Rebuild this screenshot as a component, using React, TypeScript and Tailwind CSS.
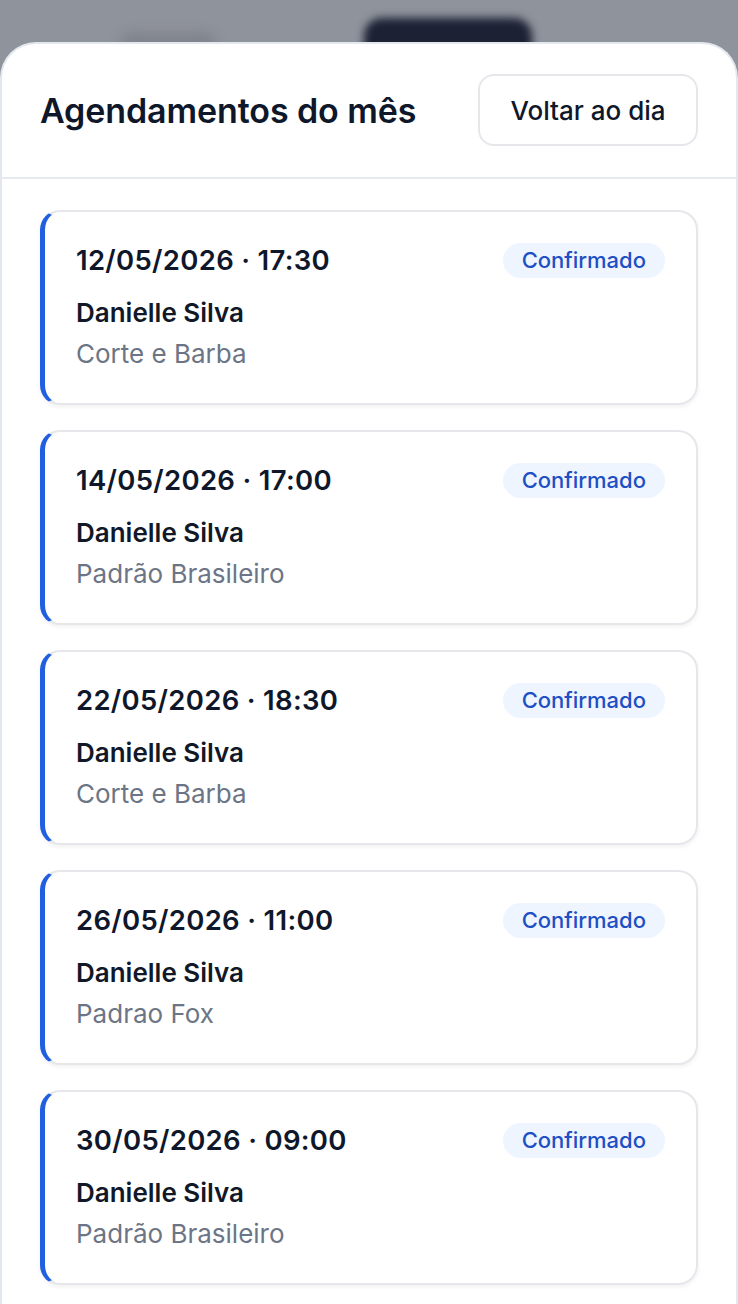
import React from 'react';

interface Appointment {
  id: number;
  date: string;
  time: string;
  client: string;
  service: string;
  status: string;
}

const appointments: Appointment[] = [
  { id: 1, date: '12/05/2026', time: '17:30', client: 'Danielle Silva', service: 'Corte e Barba', status: 'Confirmado' },
  { id: 2, date: '14/05/2026', time: '17:00', client: 'Danielle Silva', service: 'Padrão Brasileiro', status: 'Confirmado' },
  { id: 3, date: '22/05/2026', time: '18:30', client: 'Danielle Silva', service: 'Corte e Barba', status: 'Confirmado' },
  { id: 4, date: '26/05/2026', time: '11:00', client: 'Danielle Silva', service: 'Padrao Fox', status: 'Confirmado' },
  { id: 5, date: '30/05/2026', time: '09:00', client: 'Danielle Silva', service: 'Padrão Brasileiro', status: 'Confirmado' },
];

const AppointmentCard: React.FC<{ item: Appointment }> = ({ item }) => (
  <div className="rounded-[20px] border-2 border-l-[5px] border-[#e5e7eb] border-l-[#1f5fe0] bg-white px-[31px] pt-[31px] pb-[32px] shadow-[0_2px_4px_rgba(15,23,42,0.06)]">
    <div className="flex items-center justify-between h-[35px]">
      <span className="text-[27.5px] font-semibold text-[#0f172a] tracking-[0.3px]">
        {item.date} · {item.time}
      </span>
      <span className="h-[35px] flex items-center px-[19px] rounded-full bg-[#eef5ff] text-[22px] font-medium text-[#1e4fc4]">
        {item.status}
      </span>
    </div>
    <p className="mt-[18px] text-[26px] leading-[34px] font-semibold text-[#111827]">{item.client}</p>
    <p className="mt-[7px] text-[26px] leading-[34px] text-[#6b7585]">{item.service}</p>
  </div>
);

export default function App() {
  return (
    <div
      className="relative w-[738px] h-[1304px] overflow-hidden bg-[#8f939c]"
      style={{ fontFamily: 'Inter, "Noto Sans", sans-serif' }}
    >
      {/* blurred page behind the sheet */}
      <div className="absolute left-[120px] top-[32px] w-[96px] h-[24px] rounded-full bg-[#80848d] blur-[6px]" />
      <div className="absolute left-[364px] top-[18px] w-[168px] h-[60px] rounded-[18px] bg-[#1c2134] blur-[4px]" />

      <div className="absolute inset-x-0 top-[42px] bottom-0 flex flex-col rounded-t-[36px] border-2 border-b-0 border-[#e3e8ef] bg-white">
        <div className="flex items-center justify-between px-[38px] pt-[30px] pb-[31px] border-b-2 border-[#e5e9f0]">
          <h2 className="text-[34px] font-semibold text-[#0f172a] tracking-[-0.1px]">Agendamentos do mês</h2>
          <button className="h-[72px] w-[220px] rounded-[16px] border-2 border-[#e5e7eb] bg-white text-[26px] font-medium text-[#0f172a]">
            Voltar ao dia
          </button>
        </div>
        <div className="flex flex-col gap-[25px] px-[38px] pt-[31px]">
          {appointments.map(a => (
            <AppointmentCard key={a.id} item={a} />
          ))}
        </div>
      </div>
    </div>
  );
}
